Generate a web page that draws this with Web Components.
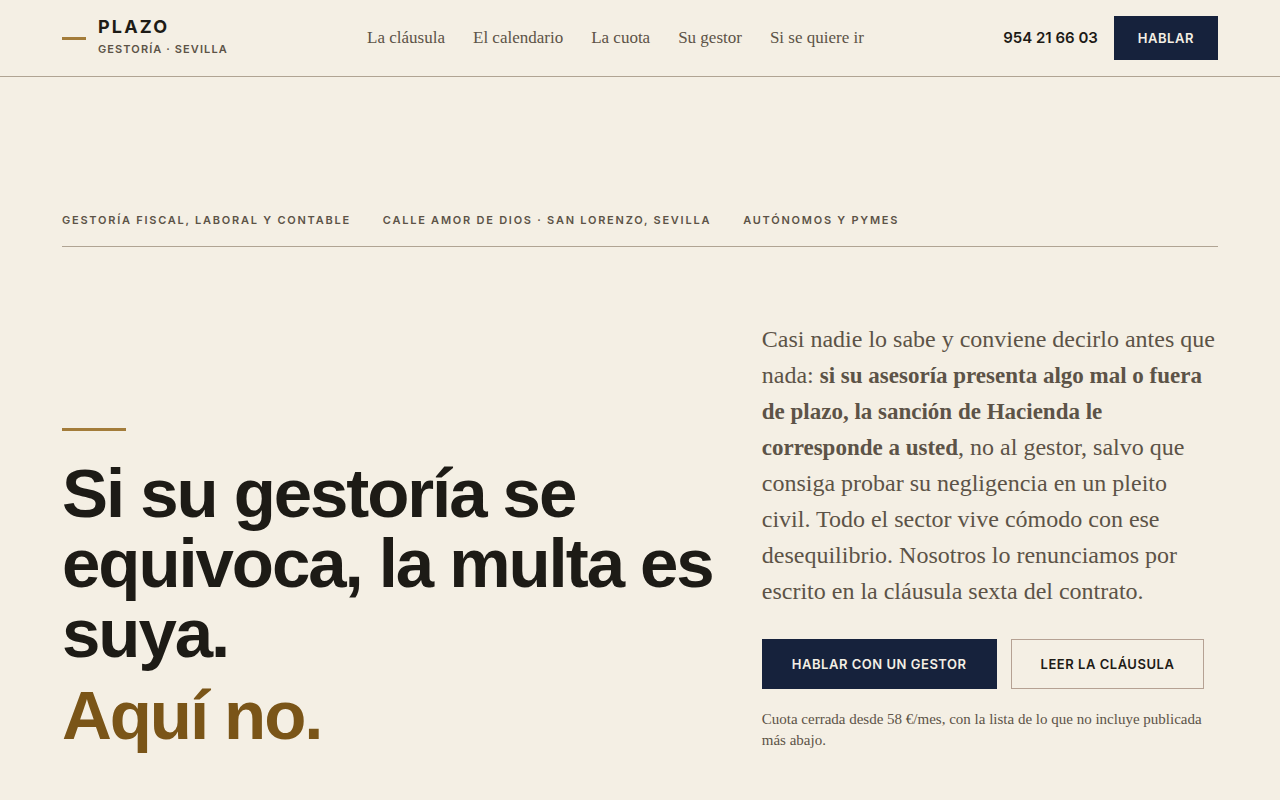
<!DOCTYPE html>
<html lang="es">
<head>
<meta charset="utf-8">
<meta name="viewport" content="width=device-width, initial-scale=1">
<title>Plazo · Gestoría en Sevilla</title>
<style>
  :root {
    --paper: #f4efe4;
    --ink: #1d1b16;
    --soft: #5c5347;
    --rule: #b0a493;
    --rule-warm: #b5a193;
    --navy: #16223c;
    --brass: #a37c3a;
    --brass-dark: #7a5518;
    --sans: Inter, "Liberation Sans", sans-serif;
    --display: "Liberation Sans", Arial, sans-serif;
    --serif: "Liberation Serif", serif;
    --gutter: 62px;
  }
  body { margin: 0; background: var(--paper); color: var(--soft); font-family: var(--serif); }
</style>
</head>
<body>
<plazo-page></plazo-page>

<script>
class Base extends HTMLElement {
  constructor() {
    super();
    this.attachShadow({ mode: "open" }).innerHTML = this.constructor.markup;
  }
}

class PlazoBrand extends Base {
  static markup = `
    <style>
      :host { display: block; }
      a { display: flex; align-items: center; gap: 12px; text-decoration: none; color: var(--ink); font-family: var(--sans); }
      i { width: 24px; height: 3px; background: var(--brass); }
      span { display: block; }
      .name { font-size: 18px; line-height: 22px; font-weight: 700; letter-spacing: .12em; }
      .place { font-size: 11px; line-height: 22px; font-weight: 600; letter-spacing: .1em; color: var(--soft); }
    </style>
    <a href="#inicio"><i></i><span><span class="name">PLAZO</span><span class="place">GESTORÍA · SEVILLA</span></span></a>`;
}
customElements.define("plazo-brand", PlazoBrand);

class PlazoNav extends Base {
  static markup = `
    <style>
      :host { display: block; }
      nav { display: flex; gap: 28px; }
      ::slotted(a) { font-size: 17px; line-height: 24px; color: var(--soft); text-decoration: none; white-space: nowrap; }
    </style>
    <nav aria-label="Principal"><slot></slot></nav>`;
}
customElements.define("plazo-nav", PlazoNav);

class PlazoButton extends Base {
  static markup = `
    <style>
      :host { display: block; }
      button {
        box-sizing: border-box; height: 50px; padding: 0 29px; margin: 0; display: block;
        border: 1px solid var(--navy); border-radius: 0; background: var(--navy); color: var(--paper);
        font: 600 13px/20px var(--sans); letter-spacing: .04em; white-space: nowrap; cursor: pointer;
      }
      :host([compact]) button { height: 44px; padding: 0 23px; }
      :host([outline]) button { background: transparent; border-color: var(--rule-warm); color: var(--ink); }
    </style>
    <button type="button"><slot></slot></button>`;
}
customElements.define("plazo-button", PlazoButton);

class PlazoHeader extends Base {
  static markup = `
    <style>
      :host { display: block; border-bottom: 1px solid var(--rule); }
      header { display: flex; align-items: center; justify-content: space-between; padding: 16px var(--gutter); }
      .contact { display: flex; align-items: center; gap: 16px; }
      .phone { font: 600 15px/20px var(--sans); color: var(--ink); text-decoration: none; white-space: nowrap; }
    </style>
    <header>
      <plazo-brand></plazo-brand>
      <plazo-nav>
        <a href="#clausula">La cláusula</a>
        <a href="#calendario">El calendario</a>
        <a href="#cuota">La cuota</a>
        <a href="#gestor">Su gestor</a>
        <a href="#salida">Si se quiere ir</a>
      </plazo-nav>
      <div class="contact">
        <a class="phone" href="tel:+34954216603">954 21 66 03</a>
        <plazo-button compact>HABLAR</plazo-button>
      </div>
    </header>`;
}
customElements.define("plazo-header", PlazoHeader);

class PlazoFacts extends Base {
  static markup = `
    <style>
      :host { display: block; border-bottom: 1px solid var(--rule); padding-bottom: 16px; }
      ul { display: flex; flex-wrap: wrap; gap: 0 32px; margin: 0; padding: 0; list-style: none; }
      ::slotted(li) { font: 600 11px/20px var(--sans); letter-spacing: .16em; color: var(--soft); }
    </style>
    <ul><slot></slot></ul>`;
}
customElements.define("plazo-facts", PlazoFacts);

class PlazoTitle extends Base {
  static markup = `
    <style>
      :host { display: block; }
      :host::before { content: ""; display: block; width: 64px; height: 3px; margin-bottom: 28px; background: var(--brass); }
      h1 { margin: 0; font: 700 69px/70px var(--display); letter-spacing: -.03em; color: var(--ink); }
      span { display: block; margin-top: 12px; color: var(--brass-dark); }
    </style>
    <h1><slot></slot><span><slot name="answer"></slot></span></h1>`;
}
customElements.define("plazo-title", PlazoTitle);

class PlazoHero extends Base {
  static markup = `
    <style>
      :host { display: block; padding: 133px var(--gutter) 48px; }
      .split { display: grid; grid-template-columns: 10fr 7fr; gap: 48px; align-items: end; margin-top: 74px; }
      .lead { margin: 0; font-size: 24px; line-height: 36px; }
      .lead strong { font-size: 23px; line-height: 24px; }
      .actions { display: flex; flex-wrap: wrap; gap: 14px; margin-top: 30px; }
      .note { margin: 20px 0 0; font-size: 15px; line-height: 21px; }
    </style>
    <section>
      <plazo-facts>
        <li>GESTORÍA FISCAL, LABORAL Y CONTABLE</li>
        <li>CALLE AMOR DE DIOS · SAN LORENZO, SEVILLA</li>
        <li>AUTÓNOMOS Y PYMES</li>
      </plazo-facts>
      <div class="split">
        <plazo-title>Si su gestoría se equivoca, la multa es suya.<span slot="answer">Aquí no.</span></plazo-title>
        <div>
          <p class="lead">Casi nadie lo sabe y conviene decirlo antes que nada: <strong>si su asesoría presenta algo mal o fuera de plazo, la sanción de Hacienda le corresponde a usted</strong>, no al gestor, salvo que consiga probar su negligencia en un pleito civil. Todo el sector vive cómodo con ese desequilibrio. Nosotros lo renunciamos por escrito en la cláusula sexta del contrato.</p>
          <div class="actions">
            <plazo-button>HABLAR CON UN GESTOR</plazo-button>
            <plazo-button outline>LEER LA CLÁUSULA</plazo-button>
          </div>
          <p class="note">Cuota cerrada desde 58 €/mes, con la lista de lo que no incluye publicada más abajo.</p>
        </div>
      </div>
    </section>`;
}
customElements.define("plazo-hero", PlazoHero);

class PlazoPage extends Base {
  static markup = `
    <style>:host { display: block; } main { display: block; }</style>
    <plazo-header></plazo-header>
    <main id="inicio"><plazo-hero></plazo-hero></main>`;
}
customElements.define("plazo-page", PlazoPage);
</script>
</body>
</html>
